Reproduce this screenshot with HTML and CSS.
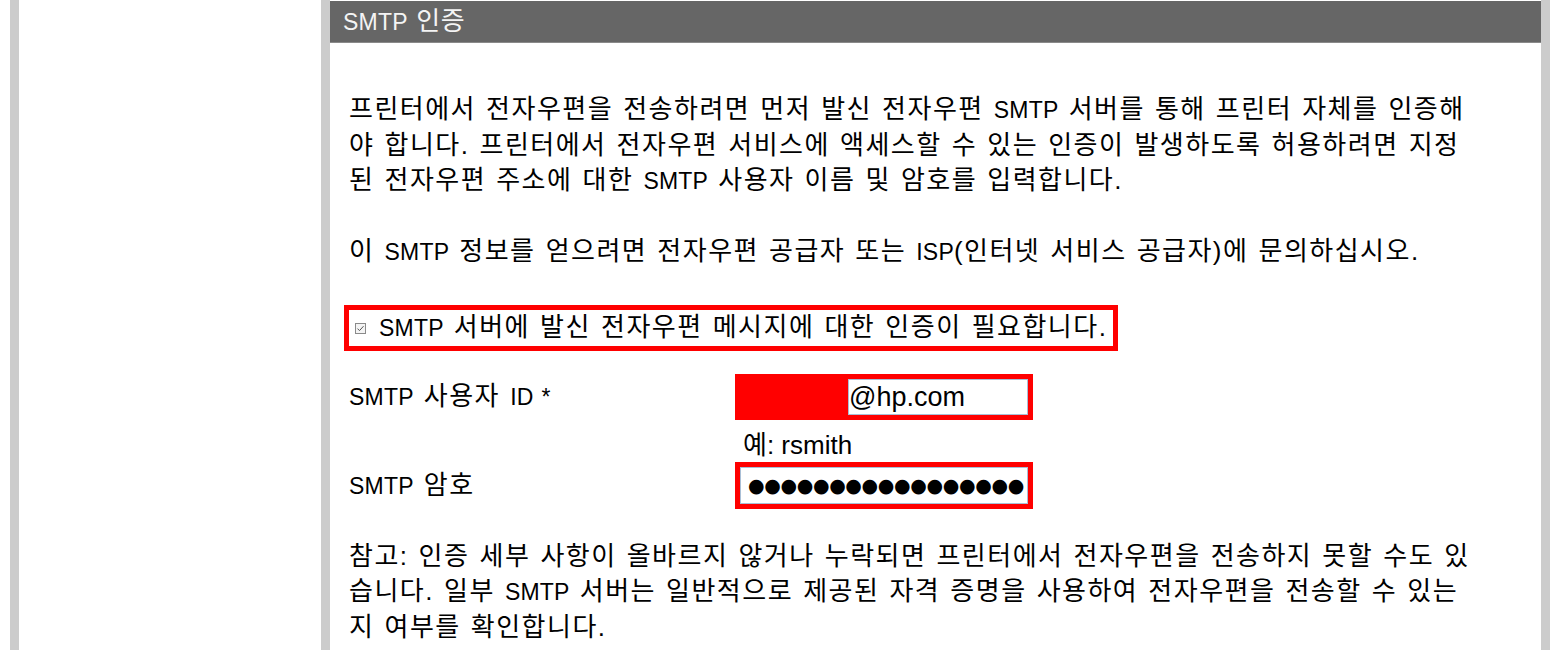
FILE: index.html
```html
<!DOCTYPE html>
<html lang="ko">
<head>
<meta charset="utf-8">
<title>SMTP 인증</title>
<link rel="stylesheet" href="styles.css">
</head>
<body>
<div class="page">
  <div class="nav-col"></div>
  <div class="main">
    <div class="section-head"><span class="en">SMTP</span> 인증</div>
    <div class="section-body">
      <p class="para">프린터에서 전자우편을 전송하려면 먼저 발신 전자우편 <span class="en">SMTP</span> 서버를 통해 프린터 자체를 인증해야 합니다. 프린터에서 전자우편 서비스에 액세스할 수 있는 인증이 발생하도록 허용하려면 지정된 전자우편 주소에 대한 <span class="en">SMTP</span> 사용자 이름 및 암호를 입력합니다.</p>
      <p class="para">이 <span class="en">SMTP</span> 정보를 얻으려면 전자우편 공급자 또는 <span class="en">ISP</span>(인터넷 서비스 공급자)에 문의하십시오.</p>
      <div class="check-row">
        <span class="checkbox"><svg width="11" height="11" viewBox="0 0 11 11"><rect x="0.5" y="0.5" width="10" height="10" fill="#f4f4f4" stroke="#8a8a8a"/><path d="M2.5 5.6 L4.5 7.6 L8.5 3.2" fill="none" stroke="#555" stroke-width="1"/></svg></span>
        <span class="check-label"><span class="en">SMTP</span> 서버에 발신 전자우편 메시지에 대한 인증이 필요합니다.</span>
      </div>
      <div class="form">
        <div class="label"><span class="en">SMTP</span> 사용자 <span class="en">ID *</span></div>
        <div class="hl">
          <span class="redact"></span>
          <span class="field user">@hp.com</span>
        </div>
        <div class="label"></div>
        <div class="hint">예: rsmith</div>
        <div class="label"><span class="en">SMTP</span> 암호</div>
        <div class="hl">
          <span class="field pass">●●●●●●●●●●●●●●●●●</span>
        </div>
      </div>
      <p class="para note">참고: 인증 세부 사항이 올바르지 않거나 누락되면 프린터에서 전자우편을 전송하지 못할 수도 있습니다. 일부 <span class="en">SMTP</span> 서버는 일반적으로 제공된 자격 증명을 사용하여 전자우편을 전송할 수 있는지 여부를 확인합니다.</p>
    </div>
  </div>
</div>
</body>
</html>
```

FILE: styles.css
```css
html, body {
  margin: 0;
  padding: 0;
  background: #fff;
}
body {
  font-family: "Liberation Sans", "Noto Sans CJK KR", sans-serif;
  color: #000;
  font-size: 26px;
  line-height: 35px;
  letter-spacing: 1.48px;
  word-spacing: 1.4px;
  height: 650px;
  overflow: hidden;
}
.en {
  font-size: 23px;
  letter-spacing: 0.2px;
}
.page {
  display: flex;
  height: 650px;
}
.nav-col {
  margin-left: 10px;
  width: 302px;
  border-left: 9px solid #cccccc;
  border-right: 9px solid #cccccc;
}
.main {
  width: 1211px;
  border-right: 9px solid #cccccc;
  display: flex;
  flex-direction: column;
}
.section-head {
  margin-top: 1px;
  height: 41px;
  background: #666666;
  border-bottom: 1px solid #8a8a8a;
  color: #f4f4f4;
  font-size: 26px;
  line-height: 41px;
  padding-left: 13px;
  letter-spacing: 0.4px;
  word-spacing: 1px;
}
.section-body {
  padding: 49px 66px 0 19px;
}
.para {
  margin: 0 0 35px 0;
}
.check-row {
  display: flex;
  width: fit-content;
  align-items: center;
  margin: 1px 0 0 -5px;
  height: 36px;
  border: 5px solid #ff0000;
  padding: 0 6px 0 6px;
  gap: 13px;
}
.checkbox {
  display: flex;
  width: 11px;
  height: 11px;
}
.form {
  margin-top: 23px;
  display: grid;
  grid-template-columns: 386px 298px;
  grid-template-rows: 46px 42px 47px;
  align-items: center;
}
.hl {
  box-sizing: border-box;
  height: 100%;
  border: 5px solid #ff0000;
  display: flex;
  background: #ff0000;
}
.redact {
  width: 108px;
  background: #ff0000;
}
.field {
  flex: 1;
  background: #fff;
  border: 1px solid #a9bfd6;
  font-size: 27px;
  line-height: 34px;
  letter-spacing: 0;
  word-spacing: 0;
}
.user {
  padding-left: 0;
  padding-top: 1px;
  line-height: 33px;
}
.pass {
  font-family: "DejaVu Sans", sans-serif;
  font-size: 19px;
  padding-left: 7px;
  letter-spacing: -0.35px;
  white-space: nowrap;
  overflow: hidden;
}
.hint {
  padding-left: 8px;
  padding-top: 8px;
  letter-spacing: 0;
  word-spacing: 0;
}
.note {
  margin-top: 30px;
}
```
